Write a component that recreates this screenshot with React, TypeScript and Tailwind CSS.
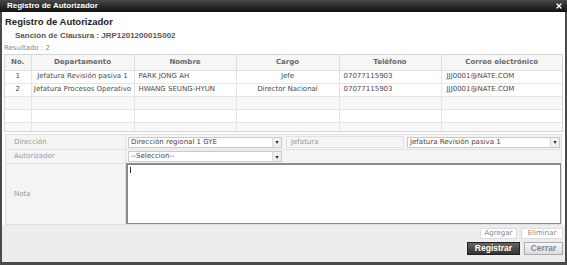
import { X } from 'lucide-react'

const rows = [
  { no: '1', dep: 'Jefatura Revisión pasiva 1', nombre: 'PARK JONG AH', cargo: 'Jefe', tel: '07077115903', mail: 'JJJ0001@NATE.COM' },
  { no: '2', dep: 'Jefatura Procesos Operativo', nombre: 'HWANG SEUNG-HYUN', cargo: 'Director Nacional', tel: '07077115903', mail: 'JJJ0001@NATE.COM' },
]

function Select({ value }: { value: string }) {
  return (
    <div className="flex h-[11px] w-full items-stretch border border-[#c9c9c9] bg-white">
      <div className="flex-1 truncate pl-[2px] text-[7px] leading-[9px] text-[#444]">{value}</div>
      <div className="flex w-[9px] items-center justify-center border-l border-[#dcdcdc] bg-[#f0f0f0] text-[6px] leading-none text-[#222]">▾</div>
    </div>
  )
}

export default function App() {
  const empty = [0, 1, 2, 3]
  return (
    <div
      className="flex h-[265px] w-[567px] flex-col bg-[#4a4a4a] pb-[3px]"
      style={{ fontFamily: '"DejaVu Sans", Verdana, sans-serif' }}
    >
      {/* Title bar */}
      <div className="flex h-[12px] items-center justify-between bg-gradient-to-b from-[#4a4a4a] to-[#111] pl-[7px] pr-[4px]">
        <span className="text-[8px] font-bold leading-none text-white" style={{ fontFamily: '"Liberation Sans", Arial, sans-serif' }}>
          Registro de Autorizador
        </span>
        <X className="h-[8px] w-[8px] text-white" strokeWidth={4} />
      </div>

      {/* Body */}
      <div className="mx-[2px] flex flex-1 flex-col bg-white">
        <div className="pl-[3px] pt-[3px] text-[9.5px] font-bold leading-[13px] text-[#222]" style={{ fontFamily: '"Liberation Sans", Arial, sans-serif' }}>
          Registro de Autorizador
        </div>
        <div className="pl-[13px] pt-[3px] text-[8px] font-bold leading-[10px] text-[#555]" style={{ fontFamily: '"Liberation Sans", Arial, sans-serif' }}>
          Sanción de Clausura : JRP120120001S002
        </div>
        <div className="pl-[2px] pt-[3px] text-[7px] leading-[9px] text-[#888]">Resultado : 2</div>

        {/* Grid */}
        <div className="ml-[2px] mr-[2px] mt-[1px] h-[78px] overflow-hidden border border-[#d6d6d6]">
          <table className="w-full table-fixed border-collapse text-[7px] text-[#4a4a4a]">
            <colgroup>
              <col className="w-[26px]" />
              <col className="w-[103px]" />
              <col className="w-[102px]" />
              <col className="w-[103px]" />
              <col className="w-[102px]" />
              <col />
            </colgroup>
            <thead>
              <tr className="h-[15px] bg-[#f6f6f6] font-bold text-[#6a6a6a]">
                <th className="border-r border-b border-[#dedede] font-bold">No.</th>
                <th className="border-r border-b border-[#dedede] font-bold">Departamento</th>
                <th className="border-r border-b border-[#dedede] font-bold">Nombre</th>
                <th className="border-r border-b border-[#dedede] font-bold">Cargo</th>
                <th className="border-r border-b border-[#dedede] font-bold">Teléfono</th>
                <th className="border-b border-[#dedede] font-bold">Correo electrónico</th>
              </tr>
            </thead>
            <tbody>
              {rows.map((r) => (
                <tr key={r.no} className="h-[13px] bg-white">
                  <td className="border-r border-b border-[#e6e6e6] text-center">{r.no}</td>
                  <td className="overflow-hidden whitespace-nowrap border-r border-b border-[#e6e6e6] px-[2px] text-center">{r.dep}</td>
                  <td className="overflow-hidden whitespace-nowrap border-r border-b border-[#e6e6e6] px-[4px]">{r.nombre}</td>
                  <td className="overflow-hidden whitespace-nowrap border-r border-b border-[#e6e6e6] text-center">{r.cargo}</td>
                  <td className="overflow-hidden whitespace-nowrap border-r border-b border-[#e6e6e6] px-[4px]">{r.tel}</td>
                  <td className="overflow-hidden whitespace-nowrap border-b border-[#e6e6e6] px-[5px]">{r.mail}</td>
                </tr>
              ))}
              {empty.map((i) => (
                <tr key={i} className={i % 2 === 0 ? 'h-[13px] bg-[#f8f8f8]' : 'h-[13px] bg-white'}>
                  <td className="border-r border-b border-[#e6e6e6]"></td>
                  <td className="border-r border-b border-[#e6e6e6]"></td>
                  <td className="border-r border-b border-[#e6e6e6]"></td>
                  <td className="border-r border-b border-[#e6e6e6]"></td>
                  <td className="border-r border-b border-[#e6e6e6]"></td>
                  <td className="border-b border-[#e6e6e6]"></td>
                </tr>
              ))}
            </tbody>
          </table>
        </div>

        {/* Form */}
        <div className="mx-[3px] mt-[2px] flex flex-col border border-[#e0e0e0] bg-[#f4f4f4] text-[7px] text-[#999]">
          <div className="flex h-[15px] items-center border-b border-[#e2e2e2]">
            <div className="flex h-full w-[120px] items-center border-r border-[#e2e2e2] pl-[8px]">Dirección</div>
            <div className="flex h-full w-[158px] items-center px-[2px]">
              <Select value="Dirección regional 1 GYE" />
            </div>
            <div className="mx-[2px] flex h-[12px] w-[118px] items-center border border-[#e2e2e2] pl-[4px]">Jefatura</div>
            <div className="flex h-full flex-1 items-center pl-[1px] pr-[1px]">
              <Select value="Jefatura Revisión pasiva 1" />
            </div>
          </div>
          <div className="flex h-[13px] items-center">
            <div className="flex h-full w-[120px] items-center border-r border-[#e2e2e2] pl-[8px]">Autorizador</div>
            <div className="flex h-full w-[158px] items-center px-[2px]">
              <Select value="--Seleccion--" />
            </div>
          </div>
          <div className="flex h-[61px]">
            <div className="flex w-[120px] items-center border-r border-t border-[#e2e2e2] pl-[8px]">Nota</div>
            <div className="relative flex-1 border border-l-2 border-t-2 border-[#8a8a8a] bg-white">
              <div className="absolute left-[2px] top-[2px] h-[6px] w-px bg-[#333]"></div>
            </div>
          </div>
        </div>

        {/* Buttons */}
        <div className="flex flex-1 flex-col items-end gap-[3px] bg-[#ededed] pr-[2px] pt-[3px]">
          <div className="flex gap-[4px]">
            <button className="h-[11px] w-[37px] border border-[#dcdcdc] bg-white text-[7px] leading-none text-[#888]">Agregar</button>
            <button className="h-[11px] w-[42px] border border-[#dcdcdc] bg-white text-[7px] leading-none text-[#888]">Eliminar</button>
          </div>
          <div className="flex gap-[4px]">
            <button
              className="h-[13px] w-[53px] border border-[#222] bg-gradient-to-b from-[#666] to-[#333] text-[8.5px] font-bold leading-none text-white"
              style={{ fontFamily: '"Liberation Sans", Arial, sans-serif' }}
            >
              Registrar
            </button>
            <button
              className="h-[13px] w-[39px] border border-[#aaa] bg-gradient-to-b from-[#f6f6f6] to-[#dcdcdc] text-[8.5px] font-bold leading-none text-[#888]"
              style={{ fontFamily: '"Liberation Sans", Arial, sans-serif' }}
            >
              Cerrar
            </button>
          </div>
        </div>
      </div>
    </div>
  )
}
